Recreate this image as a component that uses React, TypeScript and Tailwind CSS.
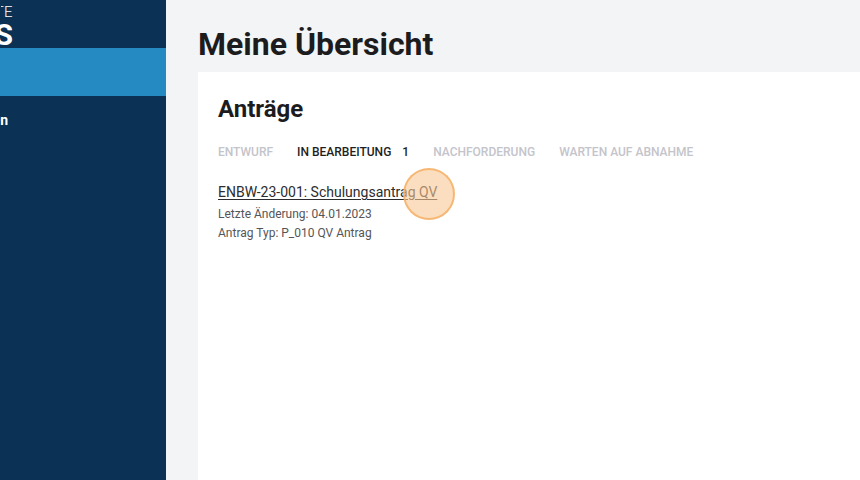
import React from "react";

export default function App() {
  return (
    <div className="w-[860px] h-[480px] flex overflow-hidden bg-[#f3f4f6]" style={{ fontFamily: "Roboto, 'Liberation Sans', sans-serif" }}>
      <aside className="w-[166px] shrink-0 h-full bg-[#0b3254] flex flex-col">
        <div className="h-[48px] flex flex-col items-end w-[13px] overflow-hidden">
          <div className="flex justify-end w-[12px] overflow-hidden text-white text-[15px] font-light leading-none mt-[5px] tracking-wide whitespace-nowrap">ACADEMY SUITE</div>
          <div className="flex justify-end w-[13px] overflow-hidden text-white text-[30px] font-bold leading-none mt-[1px] whitespace-nowrap">TOOLS</div>
        </div>
        <div className="h-[48px] bg-[#2589c2]"></div>
        <div className="mt-[14px] flex justify-end w-[8px] overflow-hidden text-white text-[14px] font-bold whitespace-nowrap leading-[20px]">Anträge verwalten</div>
      </aside>
      <main className="flex-1 flex flex-col pl-[32px]">
        <h1 className="text-[32px] font-bold text-[#1c1c1e] leading-none pt-[28px] h-[72px]">Meine Übersicht</h1>
        <section className="flex-1 bg-white pl-[20px] pt-[24px] relative">
          <h2 className="text-[24px] font-bold text-[#1c1c1e] leading-[27px]">Anträge</h2>
          <div className="flex gap-[24px] mt-[22px] text-[12px] font-medium uppercase leading-[14px]">
            <span className="text-[#c4c4cb]">Entwurf</span>
            <span className="text-[#1f1f22] flex gap-[11px]"><span>In Bearbeitung</span><span>1</span></span>
            <span className="text-[#c4c4cb]">Nachforderung</span>
            <span className="text-[#c4c4cb]">Warten auf Abnahme</span>
          </div>
          <div className="mt-[23px] relative">
            <div className="text-[14px] text-[#2c2c2e] underline underline-offset-2 leading-[20px]">ENBW-23-001: Schulungsantrag QV</div>
            <div className="text-[12px] text-[#555558] leading-[19px] mt-[3px]">Letzte Änderung: 04.01.2023</div>
            <div className="text-[12px] text-[#555558] leading-[19px]">Antrag Typ: P_010 QV Antrag</div>
            <div className="absolute left-[185px] top-[-14px] w-[52px] h-[52px] rounded-full bg-[#f9c894]/60 border-2 border-[#f6ae62]/80"></div>
          </div>
        </section>
      </main>
    </div>
  );
}
